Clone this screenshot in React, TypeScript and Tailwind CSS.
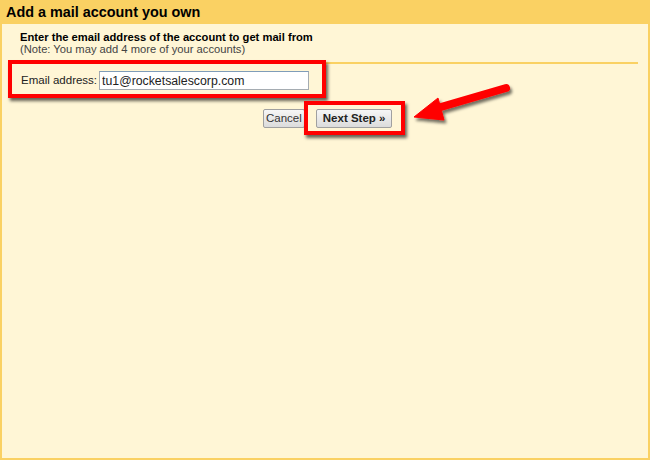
import React from 'react';

function Arrow() {
  return (
    <svg className="absolute left-[400px] top-[76px]" width="120" height="55" viewBox="0 0 120 55">
      <defs>
        <filter id="sh" x="-20%" y="-40%" width="150%" height="190%">
          <feDropShadow dx="2" dy="3" stdDeviation="1.5" floodColor="#000" floodOpacity="0.55" />
        </filter>
      </defs>
      <g filter="url(#sh)" fill="#ff0000" stroke="#ff0000">
        <line x1="104" y1="12" x2="32" y2="33" strokeWidth="8" strokeLinecap="round" />
        <polygon points="12,41 36,22 42,44" strokeWidth="1" strokeLinejoin="round" />
      </g>
    </svg>
  );
}

export default function App() {
  return (
    <div className="w-[650px] h-[460px] flex flex-col bg-[#fff6d6] font-['Liberation_Sans',Arial,sans-serif] text-[#222]">
      {/* Header */}
      <div className="h-[24px] shrink-0 bg-[#fad163] px-[6px] pt-[3px] text-[14.4px] leading-[18px] font-bold text-black">
        Add a mail account you own
      </div>

      {/* Body */}
      <div className="relative flex-1 border-x-2 border-b-2 border-[#fad163] pl-[18px] pt-[7px]">
        <div className="text-[11.2px] leading-[12px] font-bold text-black">
          Enter the email address of the account to get mail from
        </div>
        <div className="text-[11.2px] leading-[12px] text-[#444]">(Note: You may add 4 more of your accounts)</div>
        <div className="mt-[7px] mr-[10px] ml-[-10px] h-[2px] bg-[#fad163]" />

        <div className="mt-[7px] flex items-center pl-[1px]">
          <span className="text-[11.5px] text-[#222]">Email address:</span>
          <input
            readOnly
            value="tu1@rocketsalescorp.com"
            className="ml-[2px] w-[210px] h-[19px] bg-white border border-[#a5acb2] border-t-[#7f9db9] px-[2px] text-[12.3px] text-[#222] outline-none font-['Liberation_Sans',Arial,sans-serif]"
          />
        </div>

        <div className="mt-[19px] flex items-center gap-[11px] pl-[243px]">
          <button className="h-[19px] px-[2px] border border-[#a0a0a0] rounded-[2px] bg-gradient-to-b from-[#f6f6f6] to-[#dcdcdc] text-[11.5px] text-[#333] leading-[17px]">
            Cancel
          </button>
          <button className="h-[19px] px-[6px] border border-[#a0a0a0] rounded-[2px] bg-gradient-to-b from-[#f6f6f6] to-[#dcdcdc] text-[11.5px] font-bold text-[#222] leading-[17px]">
            Next Step »
          </button>
        </div>

        {/* annotations */}
        <div className="absolute left-[6px] top-[36px] w-[318px] h-[38px] border-[4px] border-[#ff0000] shadow-[2px_3px_3px_rgba(0,0,0,0.6)]" />
        <div className="absolute left-[302px] top-[77px] w-[101px] h-[34px] border-[4px] border-[#ff0000] shadow-[2px_3px_3px_rgba(0,0,0,0.6)]" />
        <div className="absolute left-0 top-[-24px] w-0 h-0">
          <Arrow />
        </div>
      </div>
    </div>
  );
}
